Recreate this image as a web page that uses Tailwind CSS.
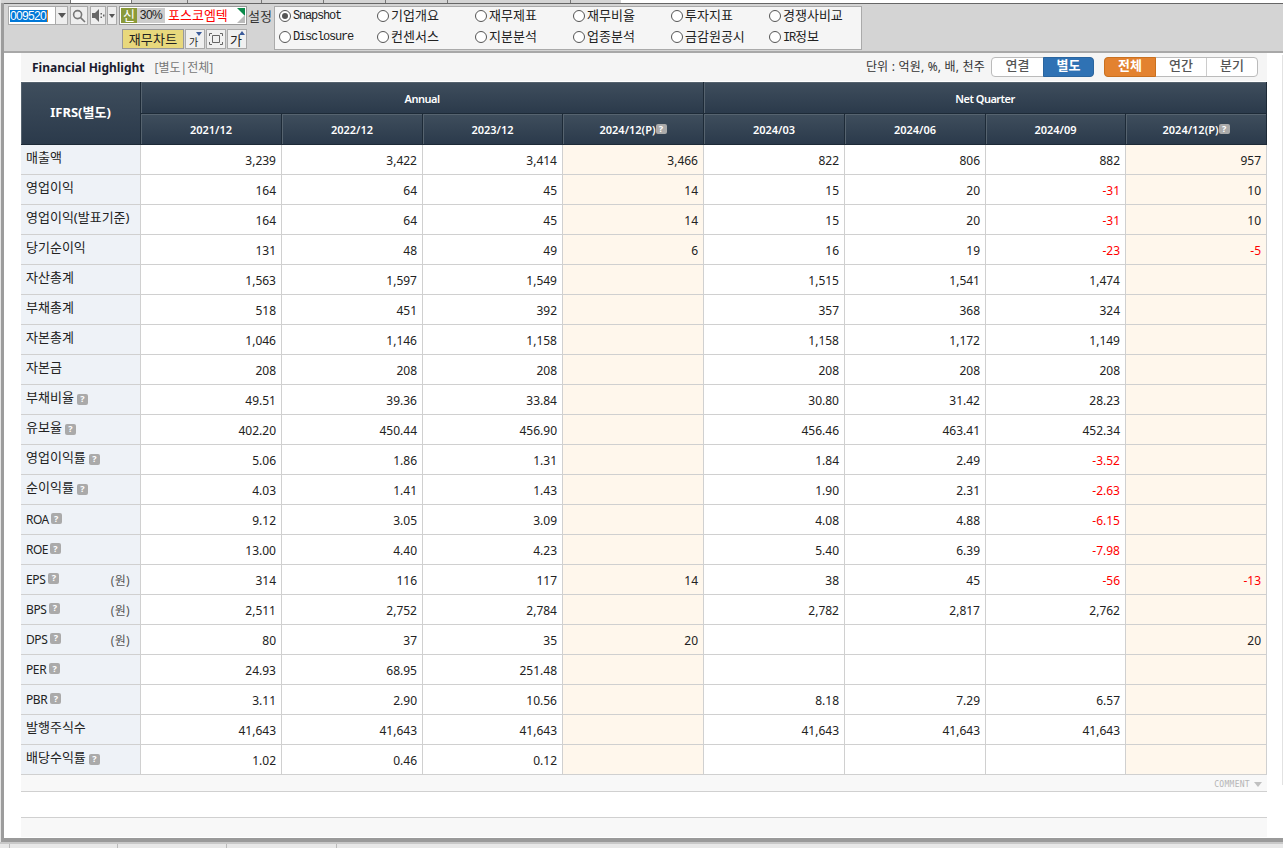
<!DOCTYPE html>
<html lang="ko">
<head>
    <meta charset="UTF-8">
    <title>Financial Highlight</title>
    <script src="https://cdn.jsdelivr.net/npm/@tailwindcss/browser@4"></script>
</head>
<body class="w-[1283px] h-[848px] overflow-hidden bg-[#e4e4e4] font-['Noto_Sans','Noto_Sans_CJK_KR',sans-serif] text-[12px] text-[#222]">
    <div class="ml-px h-[842px] flex flex-col border-l-[3px] border-[#9c9c9c]">
        <!-- tab strip -->
        <div class="h-[3px] flex shrink-0 bg-[#d4d4d4] -ml-[3px]">
            <div class="w-[70px] border-r border-[#777]"></div>
            <div class="w-[61px] bg-white border-r border-[#777]"></div>
            <div class="w-[56px] border-r border-[#777]"></div>
            <div class="w-[74px] border-r border-[#777]"></div>
            <div class="w-[62px] border-r border-[#777]"></div>
            <div class="w-[62px] border-r border-[#777]"></div>
            <div class="w-[62px] border-r border-[#777]"></div>
            <div class="w-[123px] border-r border-[#777]"></div>
            <div class="w-[50px]"></div>
            <div class="flex-1 bg-white"></div>
        </div>

        <!-- toolbar -->
        <div class="h-[50px] shrink-0 flex items-start bg-[#d4d4d4] border-t border-b-2 border-t-[#666] border-b-[#a8a8a8] pt-[2px] pl-[4px]">
            <div class="w-[239px] flex flex-col gap-[4px]">
                <div class="flex h-[19px] items-stretch">
                    <div class="w-[48px] bg-white border border-[#aaa] flex items-center pl-[1px]">
                        <span class="bg-[#0078d7] text-white font-['Liberation_Sans'] text-[12px] tracking-[-0.67px] leading-[12px] border-r border-[#e08a2c] pr-px">009520</span>
                    </div>
                    <div class="w-[12px] bg-[#eee] border border-l-0 border-[#aaa] flex items-center justify-center">
                        <span class="border-x-[4px] border-x-transparent border-t-[5px] border-t-[#555]"></span>
                    </div>
                    <div class="ml-[2px] w-[18px] bg-[#eee] border border-[#aaa] flex items-center justify-center">
                        <svg width="14" height="14" viewBox="0 0 14 14" fill="none" stroke="#777" stroke-width="1.6"><circle cx="5.6" cy="5.6" r="4"/><path d="M8.6 8.6L13 13"/></svg>
                    </div>
                    <div class="ml-[2px] w-[16px] bg-[#eee] border border-[#aaa] flex items-center justify-center">
                        <svg width="13" height="13" viewBox="0 0 13 13" fill="#666"><path d="M0 4h3l4-4v13L3 9H0z"/><rect x="8.5" y="4" width="1.5" height="1.5"/><rect x="8.5" y="7.5" width="1.5" height="1.5"/><rect x="11" y="5.5" width="1.5" height="2"/></svg>
                    </div>
                    <div class="ml-px w-[10px] bg-[#eee] border border-[#aaa] flex items-center justify-center">
                        <span class="border-x-[3px] border-x-transparent border-t-[4px] border-t-[#555]"></span>
                    </div>
                    <div class="relative ml-[2px] w-[128px] bg-white border border-[#999] p-px flex items-stretch">
                        <span class="w-[16px] bg-[#8a9a3a] text-white text-center text-[13px] leading-[15px]">신</span>
                        <span class="w-[28px] bg-[#cdcdcd] text-center leading-[15px] font-['Liberation_Sans'] text-[12px] tracking-[-0.5px]">30%</span>
                        <span class="pl-[3px] text-[#f00] text-[13px] leading-[15px]">포스코엠텍</span>
                        <span class="absolute right-px top-px border-l-[8px] border-l-transparent border-t-[8px] border-t-[#0a8a4a] w-0 h-0"></span>
                        <span class="absolute right-px bottom-px border-l-[8px] border-l-transparent border-b-[8px] border-b-[#bbb] w-0 h-0"></span>
                    </div>
                </div>
                <div class="flex h-[20px] ml-[114px] gap-px">
                    <div class="w-[62px] bg-[#e8d87c] border border-[#999] text-center leading-[18px] text-[13px] tracking-[0.2px]">재무차트</div>
                    <div class="relative w-[20px] bg-[#f0f0f0] border border-[#aaa] text-[10px] text-left pl-[3px] leading-[24px]">가<span class="absolute right-[2px] top-[2px] border-x-[3px] border-x-transparent border-t-[4px] border-t-[#3a5a9a]"></span></div>
                    <div class="w-[20px] bg-[#f0f0f0] border border-[#aaa] flex items-center justify-center">
                        <svg width="14" height="12" viewBox="0 0 14 12" fill="none" stroke="#666"><path d="M3.5 2.5h7v7h-7z"/><path d="M0.5 3V0.5H3M11 0.5h2.5V3M13.5 9v2.5H11M3 11.5H0.5V9"/></svg>
                    </div>
                    <div class="relative w-[20px] bg-[#f0f0f0] border border-[#aaa] text-[13px] text-left pl-[2px] leading-[21px]">가<span class="absolute right-[1px] top-[1px] border-x-[3px] border-x-transparent border-b-[4px] border-b-[#3a5a9a]"></span></div>
                </div>
            </div>
            <div class="w-[27px] text-left text-[#333] text-[13px] leading-[20px] pl-px">설정</div>
            <div class="w-[588px] h-[44px] bg-[#f5f5f5] border border-[#aaa] pl-[4px] pt-px grid grid-cols-[repeat(6,98px)] grid-rows-[16px_25px] text-[13px]">
                <label class="flex items-center gap-[2px]"><span class="w-[12px] h-[12px] rounded-full border border-[#555] bg-white flex items-center justify-center"><span class="w-[6px] h-[6px] rounded-full bg-[#555]"></span></span><span class="font-['Liberation_Mono'] text-[12px] tracking-[-1.2px]">Snapshot</span></label>
                <label class="flex items-center gap-[2px]"><span class="w-[12px] h-[12px] rounded-full border border-[#555] bg-white"></span>기업개요</label>
                <label class="flex items-center gap-[2px]"><span class="w-[12px] h-[12px] rounded-full border border-[#555] bg-white"></span>재무제표</label>
                <label class="flex items-center gap-[2px]"><span class="w-[12px] h-[12px] rounded-full border border-[#555] bg-white"></span>재무비율</label>
                <label class="flex items-center gap-[2px]"><span class="w-[12px] h-[12px] rounded-full border border-[#555] bg-white"></span>투자지표</label>
                <label class="flex items-center gap-[2px]"><span class="w-[12px] h-[12px] rounded-full border border-[#555] bg-white"></span>경쟁사비교</label>
                <label class="flex items-center gap-[2px]"><span class="w-[12px] h-[12px] rounded-full border border-[#555] bg-white"></span><span class="font-['Liberation_Mono'] text-[12px] tracking-[-1.2px]">Disclosure</span></label>
                <label class="flex items-center gap-[2px]"><span class="w-[12px] h-[12px] rounded-full border border-[#555] bg-white"></span>컨센서스</label>
                <label class="flex items-center gap-[2px]"><span class="w-[12px] h-[12px] rounded-full border border-[#555] bg-white"></span>지분분석</label>
                <label class="flex items-center gap-[2px]"><span class="w-[12px] h-[12px] rounded-full border border-[#555] bg-white"></span>업종분석</label>
                <label class="flex items-center gap-[2px]"><span class="w-[12px] h-[12px] rounded-full border border-[#555] bg-white"></span>금감원공시</label>
                <label class="flex items-center gap-[2px]"><span class="w-[12px] h-[12px] rounded-full border border-[#555] bg-white"></span><span><span class="font-['Liberation_Mono'] text-[12px] tracking-[-1.2px]">IR</span>정보</span></label>
            </div>
        </div>

        <!-- main -->
        <div class="flex-1 min-h-0 flex bg-white pl-[17px] border-b-4 border-[#9a9a9a]">
            <div class="w-[1246px] flex flex-col">
                <div class="h-[28px] shrink-0 flex items-center bg-[#f5f5f5] pl-[11px] pr-[9px]">
                    <b class="pt-[2px] font-bold text-[#1a1a2e] text-[12px]">Financial Highlight</b>
                    <span class="pt-[2px] ml-[10px] text-[#777]">[별도|전체]</span>
                    <span class="ml-auto text-[12px] tracking-[0.2px] text-[#333]">단위 : 억원, %, 배, 천주</span>
                    <div class="ml-[6px] flex h-[20px] rounded-[4px] border border-[#bbb] bg-white w-[103px] text-center text-[13px] leading-[15px] font-medium text-[#555]">
                        <span class="w-[51px]">연결</span>
                        <span class="flex-1 -my-px -mr-px rounded-r-[4px] bg-[#2f72b4] border border-[#2a659f] text-white font-bold">별도</span>
                    </div>
                    <div class="ml-[10px] flex h-[20px] rounded-[4px] border border-[#bbb] bg-white w-[154px] text-center text-[13px] leading-[15px] font-medium text-[#555]">
                        <span class="w-[52px] -my-px -ml-px rounded-l-[4px] bg-[#e3822f] border border-[#c9701f] text-white font-bold">전체</span>
                        <span class="w-[51px] border-r border-[#ccc]">연간</span>
                        <span class="flex-1">분기</span>
                    </div>
                </div>

                <table class="mt-px table-fixed w-[1246px] border-separate border-spacing-0 [&_thead_th]:bg-linear-to-b [&_thead_th]:from-[#3f4e5d] [&_thead_th]:to-[#2b3a4b] [&_thead_th]:text-white [&_thead_th]:text-[11px] [&_thead_th]:font-semibold [&_thead_th]:border-r [&_thead_th]:border-b [&_thead_th]:border-[#1d2a37] [&_thead_th]:shadow-[inset_1px_1px_0_#56636f] [&_tbody_td]:h-[30px] [&_tbody_td]:border-r [&_tbody_td]:border-b [&_tbody_td]:border-[#d0d0d0] [&_tbody_td]:text-right [&_tbody_td]:pr-[5px] [&_tbody_td]:pt-[3px] [&_tbody_th]:h-[30px] [&_tbody_th]:bg-[#eef2f7] [&_tbody_th]:border-r [&_tbody_th]:border-b [&_tbody_th]:border-[#d0d0d0] [&_tbody_th]:font-normal [&_tbody_th]:text-[13px] [&_tbody_th]:text-left [&_tbody_th]:pl-[5px] [&_tbody_th]:pr-[10px] [&_tbody_th]:pb-[3px]">
                    <colgroup>
                        <col class="w-[120px]"><col class="w-[141px]"><col class="w-[141px]"><col class="w-[140px]"><col class="w-[141px]"><col class="w-[141px]"><col class="w-[141px]"><col class="w-[140px]"><col class="w-[141px]">
                    </colgroup>
                    <thead>
                        <tr class="h-[32px]">
                            <th rowspan="2"><span class="text-[13px] font-bold">IFRS(별도)</span></th>
                            <th colspan="4" class="pt-[3px] tracking-[-0.5px]">Annual</th>
                            <th colspan="4" class="pt-[3px] tracking-[-0.5px]">Net Quarter</th>
                        </tr>
                        <tr class="h-[31px]">
                            <th class="pt-[2px]">2021/12</th>
                            <th class="pt-[2px]">2022/12</th>
                            <th class="pt-[2px]">2023/12</th>
                            <th class="pt-[2px]">2024/12(P)<span class="inline-flex align-[2px] w-[11px] h-[10px] rounded-[2px] bg-[#aaa] text-white text-[9px] font-bold items-center justify-center">?</span></th>
                            <th class="pt-[2px]">2024/03</th>
                            <th class="pt-[2px]">2024/06</th>
                            <th class="pt-[2px]">2024/09</th>
                            <th class="pt-[2px]">2024/12(P)<span class="inline-flex align-[2px] w-[11px] h-[10px] rounded-[2px] bg-[#aaa] text-white text-[9px] font-bold items-center justify-center">?</span></th>
                        </tr>
                    </thead>
                    <tbody>
                        <tr><th>매출액</th><td>3,239</td><td>3,422</td><td>3,414</td><td class="bg-[#fff7ec]">3,466</td><td>822</td><td>806</td><td>882</td><td class="bg-[#fff7ec]">957</td></tr>
                        <tr><th>영업이익</th><td>164</td><td>64</td><td>45</td><td class="bg-[#fff7ec]">14</td><td>15</td><td>20</td><td class="text-[#f00]">-31</td><td class="bg-[#fff7ec]">10</td></tr>
                        <tr><th>영업이익(발표기준)</th><td>164</td><td>64</td><td>45</td><td class="bg-[#fff7ec]">14</td><td>15</td><td>20</td><td class="text-[#f00]">-31</td><td class="bg-[#fff7ec]">10</td></tr>
                        <tr><th>당기순이익</th><td>131</td><td>48</td><td>49</td><td class="bg-[#fff7ec]">6</td><td>16</td><td>19</td><td class="text-[#f00]">-23</td><td class="bg-[#fff7ec] text-[#f00]">-5</td></tr>
                        <tr><th>자산총계</th><td>1,563</td><td>1,597</td><td>1,549</td><td class="bg-[#fff7ec]"></td><td>1,515</td><td>1,541</td><td>1,474</td><td class="bg-[#fff7ec]"></td></tr>
                        <tr><th>부채총계</th><td>518</td><td>451</td><td>392</td><td class="bg-[#fff7ec]"></td><td>357</td><td>368</td><td>324</td><td class="bg-[#fff7ec]"></td></tr>
                        <tr><th>자본총계</th><td>1,046</td><td>1,146</td><td>1,158</td><td class="bg-[#fff7ec]"></td><td>1,158</td><td>1,172</td><td>1,149</td><td class="bg-[#fff7ec]"></td></tr>
                        <tr><th>자본금</th><td>208</td><td>208</td><td>208</td><td class="bg-[#fff7ec]"></td><td>208</td><td>208</td><td>208</td><td class="bg-[#fff7ec]"></td></tr>
                        <tr><th>부채비율<span class="ml-[3px] inline-flex w-[11px] h-[11px] rounded-[2px] bg-[#aaa] text-white text-[9px] font-bold items-center justify-center">?</span></th><td>49.51</td><td>39.36</td><td>33.84</td><td class="bg-[#fff7ec]"></td><td>30.80</td><td>31.42</td><td>28.23</td><td class="bg-[#fff7ec]"></td></tr>
                        <tr><th>유보율<span class="ml-[3px] inline-flex w-[11px] h-[11px] rounded-[2px] bg-[#aaa] text-white text-[9px] font-bold items-center justify-center">?</span></th><td>402.20</td><td>450.44</td><td>456.90</td><td class="bg-[#fff7ec]"></td><td>456.46</td><td>463.41</td><td>452.34</td><td class="bg-[#fff7ec]"></td></tr>
                        <tr><th>영업이익률<span class="ml-[3px] inline-flex w-[11px] h-[11px] rounded-[2px] bg-[#aaa] text-white text-[9px] font-bold items-center justify-center">?</span></th><td>5.06</td><td>1.86</td><td>1.31</td><td class="bg-[#fff7ec]"></td><td>1.84</td><td>2.49</td><td class="text-[#f00]">-3.52</td><td class="bg-[#fff7ec]"></td></tr>
                        <tr><th>순이익률<span class="ml-[3px] inline-flex w-[11px] h-[11px] rounded-[2px] bg-[#aaa] text-white text-[9px] font-bold items-center justify-center">?</span></th><td>4.03</td><td>1.41</td><td>1.43</td><td class="bg-[#fff7ec]"></td><td>1.90</td><td>2.31</td><td class="text-[#f00]">-2.63</td><td class="bg-[#fff7ec]"></td></tr>
                        <tr><th><span class="text-[12px] tracking-[-0.5px] align-[-2px]">ROA</span><span class="ml-[2px] inline-flex w-[11px] h-[11px] rounded-[2px] bg-[#aaa] text-white text-[9px] font-bold items-center justify-center">?</span></th><td>9.12</td><td>3.05</td><td>3.09</td><td class="bg-[#fff7ec]"></td><td>4.08</td><td>4.88</td><td class="text-[#f00]">-6.15</td><td class="bg-[#fff7ec]"></td></tr>
                        <tr><th><span class="text-[12px] tracking-[-0.5px] align-[-2px]">ROE</span><span class="ml-[2px] inline-flex w-[11px] h-[11px] rounded-[2px] bg-[#aaa] text-white text-[9px] font-bold items-center justify-center">?</span></th><td>13.00</td><td>4.40</td><td>4.23</td><td class="bg-[#fff7ec]"></td><td>5.40</td><td>6.39</td><td class="text-[#f00]">-7.98</td><td class="bg-[#fff7ec]"></td></tr>
                        <tr><th><span class="flex items-center"><span class="text-[12px] tracking-[-0.4px] pt-[4px]">EPS</span><span class="ml-[3px] inline-flex w-[11px] h-[11px] rounded-[2px] bg-[#aaa] text-white text-[9px] font-bold items-center justify-center">?</span><span class="ml-auto text-[#555] text-[12px] tracking-[0.3px] pt-[6px]">(원)</span></span></th><td>314</td><td>116</td><td>117</td><td class="bg-[#fff7ec]">14</td><td>38</td><td>45</td><td class="text-[#f00]">-56</td><td class="bg-[#fff7ec] text-[#f00]">-13</td></tr>
                        <tr><th><span class="flex items-center"><span class="text-[12px] tracking-[-0.4px] pt-[4px]">BPS</span><span class="ml-[3px] inline-flex w-[11px] h-[11px] rounded-[2px] bg-[#aaa] text-white text-[9px] font-bold items-center justify-center">?</span><span class="ml-auto text-[#555] text-[12px] tracking-[0.3px] pt-[6px]">(원)</span></span></th><td>2,511</td><td>2,752</td><td>2,784</td><td class="bg-[#fff7ec]"></td><td>2,782</td><td>2,817</td><td>2,762</td><td class="bg-[#fff7ec]"></td></tr>
                        <tr><th><span class="flex items-center"><span class="text-[12px] tracking-[-0.4px] pt-[4px]">DPS</span><span class="ml-[3px] inline-flex w-[11px] h-[11px] rounded-[2px] bg-[#aaa] text-white text-[9px] font-bold items-center justify-center">?</span><span class="ml-auto text-[#555] text-[12px] tracking-[0.3px] pt-[6px]">(원)</span></span></th><td>80</td><td>37</td><td>35</td><td class="bg-[#fff7ec]">20</td><td></td><td></td><td></td><td class="bg-[#fff7ec]">20</td></tr>
                        <tr><th><span class="text-[12px] tracking-[-0.4px] align-[-2px]">PER</span><span class="ml-[3px] inline-flex w-[11px] h-[11px] rounded-[2px] bg-[#aaa] text-white text-[9px] font-bold items-center justify-center">?</span></th><td>24.93</td><td>68.95</td><td>251.48</td><td class="bg-[#fff7ec]"></td><td></td><td></td><td></td><td class="bg-[#fff7ec]"></td></tr>
                        <tr><th><span class="text-[12px] tracking-[-0.4px] align-[-2px]">PBR</span><span class="ml-[3px] inline-flex w-[11px] h-[11px] rounded-[2px] bg-[#aaa] text-white text-[9px] font-bold items-center justify-center">?</span></th><td>3.11</td><td>2.90</td><td>10.56</td><td class="bg-[#fff7ec]"></td><td>8.18</td><td>7.29</td><td>6.57</td><td class="bg-[#fff7ec]"></td></tr>
                        <tr><th>발행주식수</th><td>41,643</td><td>41,643</td><td>41,643</td><td class="bg-[#fff7ec]"></td><td>41,643</td><td>41,643</td><td>41,643</td><td class="bg-[#fff7ec]"></td></tr>
                        <tr><th>배당수익률<span class="ml-[3px] inline-flex w-[11px] h-[11px] rounded-[2px] bg-[#aaa] text-white text-[9px] font-bold items-center justify-center">?</span></th><td>1.02</td><td>0.46</td><td>0.12</td><td class="bg-[#fff7ec]"></td><td></td><td></td><td></td><td class="bg-[#fff7ec]"></td></tr>
                    </tbody>
                </table>

                <!-- comment strip -->
                <div class="h-[17px] shrink-0 bg-[#f8f8f8] border-b border-[#d0d0d0] flex items-center justify-end gap-[4px] pr-[5px] pt-[3px]">
                    <span class="font-['DejaVu_Sans_Mono'] text-[8px] tracking-[0.3px] text-[#b5b5b5] leading-none">COMMENT</span>
                    <span class="border-x-[4px] border-x-transparent border-t-[5px] border-t-[#c0c0c0]"></span>
                </div>
                <div class="h-[26px] shrink-0 border-b border-[#d0d0d0]"></div>
                <div class="h-[19px] shrink-0 bg-[#f8f8f8]"></div>
            </div>
            <div class="ml-[15px] mt-[2px] w-px h-[730px] bg-[#e2e2e2]"></div>
        </div>
    </div>
    <!-- bottom strip -->
    <div class="h-[6px] bg-[#e8e8e8] border-t-2 border-[#c8c8c8] flex">
        <div class="w-[10px] border-r border-[#bbb]"></div>
        <div class="w-[108px] border-r border-[#bbb]"></div>
        <div class="w-[109px] border-r border-[#bbb]"></div>
        <div class="w-[110px] border-r border-[#bbb]"></div>
    </div>
</body>
</html>
